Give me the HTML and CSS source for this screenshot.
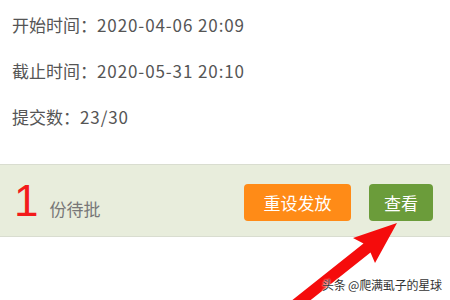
FILE: index.html
```html
<!DOCTYPE html>
<html lang="zh">
<head>
<meta charset="utf-8">
<link rel="stylesheet" href="styles.css">
</head>
<body>
<div class="page">
  <div class="info">
    <div class="line">开始时间：<span class="val">2020-04-06 20:09</span></div>
    <div class="line">截止时间：<span class="val">2020-05-31 20:10</span></div>
    <div class="line">提交数：<span class="val">23/30</span></div>
  </div>
  <div class="band">
    <div class="pending">
      <span class="count">1</span>
      <span class="label">份待批</span>
    </div>
    <div class="actions">
      <button class="btn btn-orange">重设发放</button>
      <button class="btn btn-green">查看</button>
    </div>
  </div>
  <svg class="arrow" width="450" height="300" viewBox="0 0 450 300">
    <polygon fill="#f50c0c" points="397,223 353,238 363.5,243.5 246.5,336.5 253.5,345.5 370.5,252.5 375,263"/>
  </svg>
  <div class="watermark">头条 @爬满虱子的星球</div>
</div>
</body>
</html>
```
FILE: styles.css
```css
html, body {
  margin: 0;
  padding: 0;
  background: #fff;
}
.page {
  position: relative;
  width: 450px;
  height: 300px;
  overflow: hidden;
  font-family: "Noto Sans CJK SC", "Noto Sans", sans-serif;
}
.info {
  padding: 2px 0 0 12px;
  color: #555;
  font-size: 17px;
}
.line {
  height: 46px;
  line-height: 46px;
  white-space: nowrap;
}
.val {
  letter-spacing: 0.9px;
}
.band {
  margin-top: 24px;
  height: 71px;
  border-top: 1px solid #d9ddd0;
  border-bottom: 1px solid #d9ddd0;
  background: #e8eddc;
  display: flex;
  align-items: center;
  justify-content: space-between;
  padding: 0 17px 0 14px;
}
.pending {
  display: flex;
  align-items: baseline;
  gap: 11px;
}
.count {
  color: #f31b1b;
  font-family: "Liberation Sans", Arial, sans-serif;
  font-size: 44px;
  line-height: 1;
}
.label {
  color: #777;
  font-size: 17px;
}
.actions {
  display: flex;
  gap: 18px;
  margin-top: 3px;
}
.btn {
  border: none;
  border-radius: 4px;
  height: 37px;
  color: #fff;
  font-family: "Noto Sans CJK SC", sans-serif;
  font-size: 17px;
  padding: 0;
}
.btn-orange {
  width: 107px;
  background: #ff8b17;
}
.btn-green {
  width: 64px;
  background: #6b9c3a;
}
.arrow {
  position: absolute;
  left: 0;
  top: 0;
}
.watermark {
  position: absolute;
  left: 322px;
  top: 277px;
  font-size: 12px;
  line-height: 16px;
  letter-spacing: -0.2px;
  color: #333;
  white-space: nowrap;
  text-shadow: 0 0 2px #fff, 0 0 2px #fff;
}
```
